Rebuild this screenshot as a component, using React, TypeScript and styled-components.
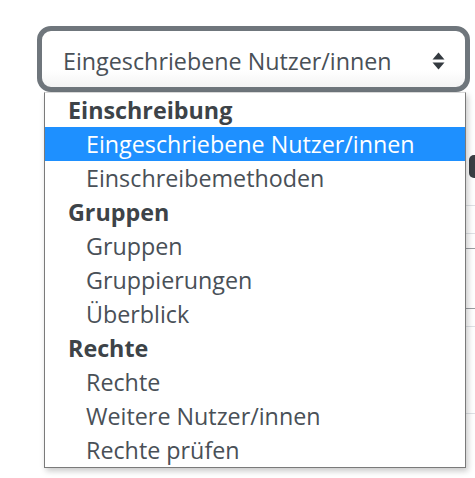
import React from 'react';
import styled, { createGlobalStyle } from 'styled-components';

const GlobalStyle = createGlobalStyle`
  html, body {
    margin: 0;
    padding: 0;
    background: #ffffff;
  }
  body {
    font-family: 'Open Sans', 'Noto Sans', Arial, sans-serif;
    color: #495057;
  }
`;

type Group = {
  label: string;
  options: string[];
};

const groups: Group[] = [
  {
    label: 'Einschreibung',
    options: ['Eingeschriebene Nutzer/innen', 'Einschreibemethoden'],
  },
  {
    label: 'Gruppen',
    options: ['Gruppen', 'Gruppierungen', 'Überblick'],
  },
  {
    label: 'Rechte',
    options: ['Rechte', 'Weitere Nutzer/innen', 'Rechte prüfen'],
  },
];

const selected = 'Eingeschriebene Nutzer/innen';

// lines of the table that lies behind the open menu
const tableLines = [
  { top: 27, strong: false },
  { top: 27, strong: false },
  { top: 14, strong: true },
  { top: 59, strong: true },
  { top: 17, strong: false },
  { top: 86, strong: false },
];

const App = () => {
  return (
    <>
      <GlobalStyle />
      <Page>
        <SelectBox>
          <SelectValue>{selected}</SelectValue>
          <SortArrows width="13" height="18" viewBox="0 0 13 18">
            <path d="M6.5 0.5 L12.5 7.5 L0.5 7.5 Z" fill="#343a40" />
            <path d="M6.5 17.5 L12.5 10.5 L0.5 10.5 Z" fill="#343a40" />
          </SortArrows>
        </SelectBox>

        <Backdrop>
          <DarkButton />
          <Table>
            {tableLines.map((line, i) => (
              <TableLine key={i} $gap={line.top} $strong={line.strong} />
            ))}
          </Table>
        </Backdrop>

        <Menu>
          {groups.map((group) => (
            <React.Fragment key={group.label}>
              <GroupLabel>{group.label}</GroupLabel>
              {group.options.map((option, i) => (
                <Option
                  key={group.label + option}
                  $active={group.label === 'Einschreibung' && i === 0}
                >
                  {option}
                </Option>
              ))}
            </React.Fragment>
          ))}
        </Menu>
      </Page>
    </>
  );
};

export default App;

const Page = styled.div`
  position: relative;
  width: 475px;
  height: 478px;
  overflow: hidden;
  background: #ffffff;
  padding-top: 26px;
  box-sizing: border-box;
`;

const SelectBox = styled.div`
  margin-left: 37px;
  width: 433px;
  height: 66px;
  box-sizing: border-box;
  border: 5px solid #6f767c;
  border-radius: 14px;
  background: linear-gradient(180deg, #ffffff 70%, #f4f4f4 100%);
  display: flex;
  align-items: center;
  justify-content: space-between;
  padding: 0 20px 0 21px;
`;

const SelectValue = styled.span`
  font-size: 23.3px;
  color: #495057;
  line-height: 1;
  white-space: nowrap;
  margin-top: 5px;
`;

const SortArrows = styled.svg`
  display: block;
  flex-shrink: 0;
  margin-top: 3px;
`;

const Backdrop = styled.div`
  display: flex;
  flex-direction: column;
  padding-top: 63px;
`;

const DarkButton = styled.div`
  margin-left: 469px;
  width: 40px;
  height: 23px;
  border-radius: 5px;
  background: #3a3f44;
`;

const Table = styled.div`
  display: flex;
  flex-direction: column;
  margin-left: 220px;
`;

const TableLine = styled.div<{ $gap: number; $strong: boolean }>`
  margin-top: ${(p) => p.$gap}px;
  height: 1px;
  background: ${(p) => (p.$strong ? '#9a9ea2' : '#dee2e6')};
`;

const Menu = styled.div`
  position: absolute;
  top: 92px;
  left: 44px;
  width: 422px;
  box-sizing: border-box;
  background: #ffffff;
  border: 1px solid #7a7a7a;
  border-top-color: #d8d8d8;
  box-shadow: 2px 3px 6px rgba(0, 0, 0, 0.22);
  display: flex;
  flex-direction: column;
`;

const GroupLabel = styled.div`
  height: 34px;
  line-height: 34px;
  padding-left: 23px;
  font-size: 23.3px;
  font-weight: 700;
  color: #3d4348;
  white-space: nowrap;
`;

const Option = styled.div<{ $active: boolean }>`
  height: 34px;
  line-height: 34px;
  padding-left: 41px;
  font-size: 23.3px;
  color: ${(p) => (p.$active ? '#ffffff' : '#495057')};
  background: ${(p) => (p.$active ? '#1e90ff' : 'transparent')};
  white-space: nowrap;
`;
